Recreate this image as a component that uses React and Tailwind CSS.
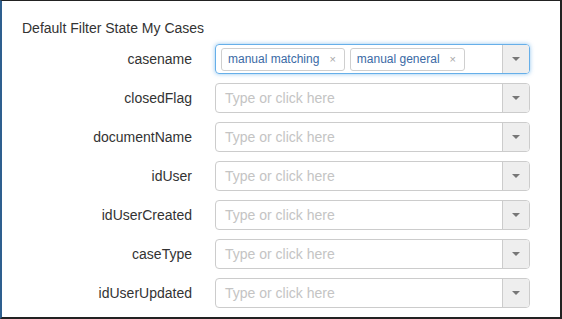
import React from "react";

const rows = ["closedFlag", "documentName", "idUser", "idUserCreated", "caseType", "idUserUpdated"];

function Arrow() {
  return (
    <div className="w-[27px] self-stretch flex items-center justify-center bg-[#eeeeee] border-l border-[#cccccc]">
      <svg width="8" height="4" viewBox="0 0 8 4">
        <path d="M0 0 L8 0 L4 4 Z" fill="#777777" />
      </svg>
    </div>
  );
}

function Tag({ text }) {
  return (
    <div className="h-[23px] flex items-center border border-[#cfcfcf] rounded-[3px] bg-white pl-[6px] pr-[8px] text-[12px] text-[#3a6aa5]">
      <span>{text}</span>
      <span className="ml-[10px] text-[11px] text-[#a8a8a8] leading-none">×</span>
    </div>
  );
}

export default function App() {
  return (
    <div className="w-[562px] h-[319px] bg-white border-t border-r-2 border-b-2 border-l-2 border-t-[#222] border-r-[#222] border-b-[#222] border-l-[#2e5f8f] overflow-hidden font-['Liberation_Sans',Arial,sans-serif]">
      <div className="pl-[20px] pt-[17px]">
        <div className="text-[14px] leading-[20px] text-[#333333]">Default Filter State My Cases</div>
        <div className="mt-[6px] flex flex-col gap-[9px]">
          <div className="flex items-center">
            <div className="w-[170px] text-right text-[14px] text-[#333333]">casename</div>
            <div className="ml-[23px] w-[315px] h-[30px] flex items-center rounded-[4px] border border-[#66afe9] shadow-[0_0_4px_rgba(102,175,233,0.7)] overflow-hidden">
              <div className="flex-1 flex items-center gap-[5px] pl-[5px]">
                <Tag text="manual matching" />
                <Tag text="manual general" />
              </div>
              <Arrow />
            </div>
          </div>
          {rows.map((r) => (
            <div key={r} className="flex items-center">
              <div className="w-[170px] text-right text-[14px] text-[#333333]">{r}</div>
              <div className="ml-[23px] w-[315px] h-[30px] flex items-center rounded-[4px] border border-[#cccccc] overflow-hidden">
                <div className="flex-1 pl-[9px] text-[14px] text-[#c4c4c4]">Type or click here</div>
                <Arrow />
              </div>
            </div>
          ))}
        </div>
      </div>
    </div>
  );
}
